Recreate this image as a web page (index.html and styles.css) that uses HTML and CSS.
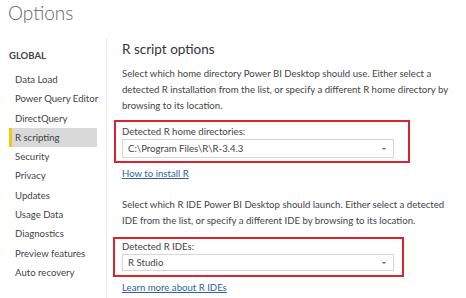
FILE: index.html
```html
<!DOCTYPE html>
<html>
<head>
    <meta charset="UTF-8">
    <link rel="stylesheet" href="styles.css">
</head>

<body>
    <h1 class="title">Options</h1>

    <div class="layout">
        <div class="sidebar">
            <div class="group">GLOBAL</div>
            <ul class="nav">
                <li>Data Load</li>
                <li>Power Query Editor</li>
                <li>DirectQuery</li>
                <li class="active">R scripting</li>
                <li>Security</li>
                <li>Privacy</li>
                <li>Updates</li>
                <li>Usage Data</li>
                <li>Diagnostics</li>
                <li>Preview features</li>
                <li>Auto recovery</li>
            </ul>
        </div>

        <div class="content">
            <h2 class="heading">R script options</h2>
            <p class="text">Select which home directory Power BI Desktop should use. Either select a detected R installation from the list, or specify a different R home directory by browsing to its location.</p>

            <div class="marked first">
                <div class="label">Detected R home directories:</div>
                <div class="select">
                    <span>C:\Program Files\R\R-3.4.3</span>
                    <span class="arrow"></span>
                </div>
            </div>
            <a class="link" href="#">How to install R</a>

            <p class="text second-text">Select which R IDE Power BI Desktop should launch. Either select a detected IDE from the list, or specify a different IDE by browsing to its location.</p>

            <div class="marked second">
                <div class="label">Detected R IDEs:</div>
                <div class="select">
                    <span>R Studio</span>
                    <span class="arrow"></span>
                </div>
            </div>
            <a class="link" href="#">Learn more about R IDEs</a>
        </div>
    </div>
</body>
</html>
```

FILE: styles.css
```css
body {
    margin: 0;
    background: #fff;
    font-family: Lato, "Liberation Sans", sans-serif;
    color: #333;
    overflow: hidden;
}

.title {
    margin: 0;
    padding: 0 0 0 8px;
    height: 38px;
    font-size: 19px;
    font-weight: 300;
    line-height: 26px;
    color: #666;
}

.layout {
    display: flex;
}

.sidebar {
    width: 106px;
    border-right: 1px solid #ececec;
    height: 260px;
}

.group {
    padding: 12px 0 0 9px;
    height: 20px;
    font-size: 9.5px;
    font-weight: bold;
    line-height: 12px;
    color: #444;
}

.nav {
    list-style: none;
    margin: 0;
    padding: 0 9px;
}

.nav li {
    height: 19.3px;
    line-height: 19.3px;
    padding-left: 3px;
    font-size: 9.6px;
    color: #444;
    white-space: nowrap;
    border-left: 3px solid transparent;
}

.nav li.active {
    background: #d9d9d9;
    border-left-color: #f2c811;
}

.content {
    padding-left: 15px;
    width: 338px;
}

.heading {
    margin: 0;
    padding-top: 1px;
    font-size: 13.5px;
    font-weight: normal;
    line-height: 20px;
    color: #333;
}

.text {
    margin: 7px 0 0 0;
    font-size: 9.6px;
    line-height: 16px;
    color: #444;
}

.marked {
    border: 2px solid #d9232e;
    width: 272px;
}

.marked.first {
    margin: 6px 0 0 -8px;
    padding: 2px 14px 3px 6px;
}

.marked.second {
    margin: 8px 0 0 -9px;
    padding: 1px 8px 4px 7px;
}

.label {
    font-size: 9.6px;
    line-height: 15px;
    color: #444;
}

.marked.second .label {
    line-height: 14px;
}

.select {
    display: flex;
    align-items: center;
    justify-content: space-between;
    height: 17px;
    border: 1px solid #d6d6d6;
    padding: 0 7px 0 5px;
    font-size: 9.6px;
    color: #444;
}

.marked.second .select {
    height: 15px;
}

.arrow {
    width: 0;
    height: 0;
    border-left: 2px solid transparent;
    border-right: 2px solid transparent;
    border-top: 2px solid #666;
}

.link {
    display: block;
    margin-top: 3px;
    font-size: 9.6px;
    line-height: 16px;
    color: #2e5fa8;
    text-decoration: underline;
}

.second-text {
    margin-top: 15px;
}
```
